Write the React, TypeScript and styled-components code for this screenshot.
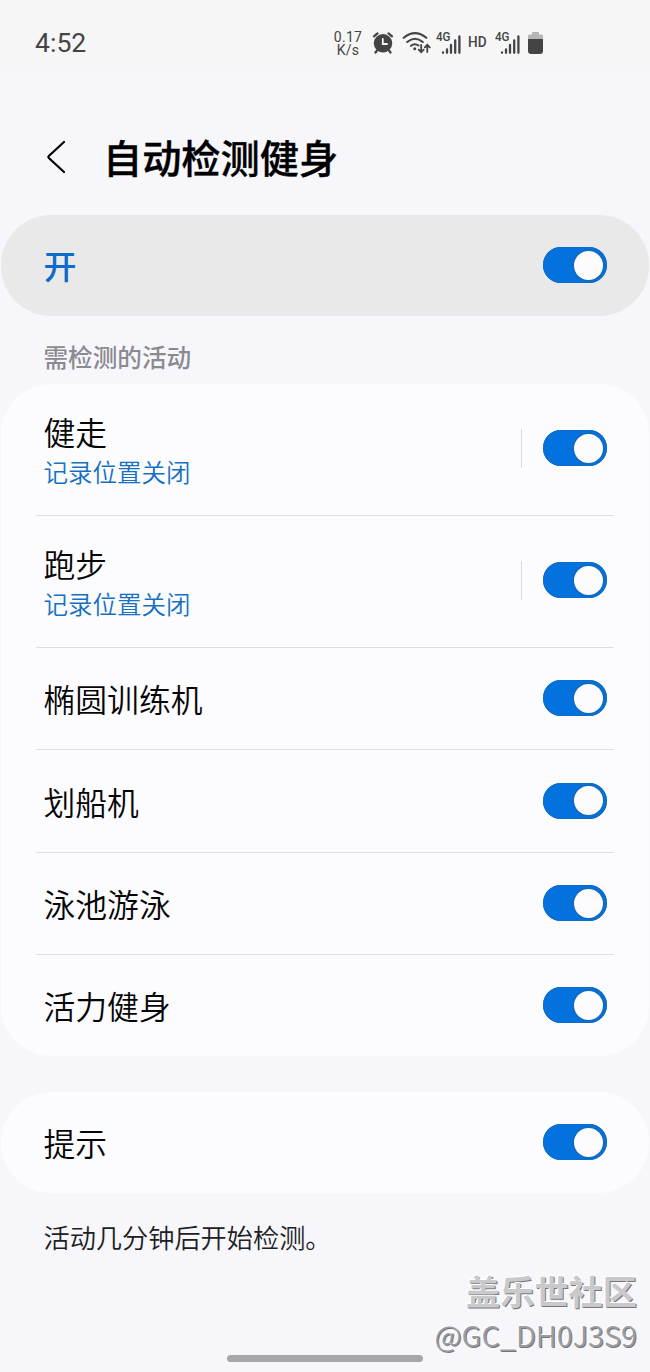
import React from 'react';
import styled, { createGlobalStyle } from 'styled-components';

const GlobalStyle = createGlobalStyle`
  * { box-sizing: border-box; }
  body {
    margin: 0;
    background: #f6f6fb;
    font-family: Roboto, "Noto Sans CJK SC", sans-serif;
    color: #0a0a0a;
  }
`;

const Screen = styled.div`
  position: relative;
  width: 650px;
  height: 1372px;
  overflow: hidden;
  display: flex;
  flex-direction: column;
  background: #f6f6fb;
`;

const StatusBar = styled.header`
  flex: none;
  height: 73px;
  padding: 0 106px 0 35px;
  display: flex;
  justify-content: space-between;
  background: #f6f6f6;
  color: #444;
`;

const Clock = styled.span`
  font-size: 26.6px;
  line-height: 30px;
  padding-top: 28px;
`;

const StatusIcons = styled.div`
  display: flex;
  padding-top: 28px;
`;

const Speed = styled.div`
  width: 32px;
  padding-top: 3px;
  display: flex;
  flex-direction: column;
  align-items: center;
  font-size: 14px;
  line-height: 13px;
  letter-spacing: 0.3px;
  white-space: nowrap;
`;

const StatusGlyphs = styled.svg`
  display: block;
  width: 180px;
  height: 32px;
`;

const TitleBar = styled.div`
  flex: none;
  height: 142px;
  padding: 64px 0 0 44px;
  display: flex;
  align-items: flex-start;
`;

const BackIcon = styled.svg`
  width: 24px;
  height: 36px;
  margin: 2px 35px 0 0;
`;

const Title = styled.h1`
  margin: 0;
  padding-top: 3px;
  font-size: 39.2px;
  line-height: 40px;
  font-weight: 500;
  color: #000;
  -webkit-text-stroke: 0.4px #000;
`;

const Card = styled.section<{ $tone?: string }>`
  flex: none;
  margin: 0 1px;
  padding: 0 35px;
  border-radius: 50px;
  background: ${p => p.$tone ?? '#fcfcff'};
`;

const Row = styled.div<{ $height: number; $divided?: boolean }>`
  height: ${p => p.$height}px;
  padding: 0 7px 0 8px;
  display: flex;
  align-items: center;
  justify-content: space-between;
  border-bottom: ${p => (p.$divided ? '1px solid #dedee3' : 'none')};
`;

const Names = styled.div<{ $stacked?: boolean }>`
  margin-left: -0.5px;
  padding-top: ${p => (p.$stacked ? 9 : 5)}px;
`;

const Label = styled.span<{ $primary?: boolean }>`
  display: block;
  font-size: ${p => (p.$primary ? 33 : 31.8)}px;
  line-height: 40px;
  font-weight: ${p => (p.$primary ? 500 : 350)};
  color: ${p => (p.$primary ? '#0d6ccb' : '#050505')};
`;

const Note = styled.span`
  display: block;
  font-size: 24.5px;
  line-height: 40px;
  font-weight: 350;
  color: #1570c2;
`;

const Controls = styled.div<{ $split?: boolean }>`
  display: flex;
  align-items: center;
  height: 39px;
  padding-left: 21px;
  margin-top: ${p => (p.$split ? -3 : -1)}px;
  border-left: ${p => (p.$split ? '1px solid #dadae0' : 'none')};
`;

const Track = styled.button`
  width: 64px;
  height: 36px;
  padding: 0 4px;
  border: 0;
  border-radius: 18px;
  display: flex;
  justify-content: flex-end;
  align-items: center;
  background: #0472de;
  box-shadow: inset 0 0 0 1px #0f6cc8;
`;

const Knob = styled.span`
  width: 29px;
  height: 29px;
  border-radius: 50%;
  background: #fcfcff;
  box-shadow: 0 0 2px 1px #1766b0;
`;

const SectionTitle = styled.h2`
  flex: none;
  height: 68px;
  margin: 0;
  padding: 25px 0 0 43.5px;
  font-size: 24.6px;
  line-height: 36px;
  font-weight: 500;
  color: #8a8a8f;
`;

const Gap = styled.div`
  flex: none;
  height: 36px;
`;

const Hint = styled.p`
  margin: 26px 0 0 43.5px;
  font-size: 26.2px;
  line-height: 40px;
  font-weight: 350;
  color: #202022;
`;

const Watermark = styled.div`
  position: absolute;
  right: 13px;
  bottom: 16px;
  display: flex;
  flex-direction: column;
  align-items: flex-end;
  font-family: "Noto Sans CJK SC", sans-serif;
`;

const Community = styled.span`
  font-size: 34.2px;
  line-height: 44px;
  font-weight: 700;
  color: #c9c9cb;
  text-shadow: -1px -1px 0 #fff, 1px 1px 0 #77777a;
`;

const Author = styled.span`
  font-size: 29px;
  line-height: 44px;
  font-weight: 350;
  color: #9c9c9f;
  text-shadow: -1px -1px 0 #fff, 1px 1px 0 #77777a;
`;

const HomeHandle = styled.div`
  position: absolute;
  left: 227px;
  bottom: 10px;
  width: 196px;
  height: 7px;
  border-radius: 4px;
  background: #a7a7a9;
`;

const Switch = ({ split }: { split?: boolean }) => (
  <Controls $split={split}>
    <Track type="button" role="switch" aria-checked="true">
      <Knob />
    </Track>
  </Controls>
);

const Bars = ({ x }: { x: number }) => (
  <path
    d={`M${x} 24.5v.3M${x + 4} 21.500v3.300M${x + 8} 17v7.800M${x + 12.200} 12.500v12.300M${x + 16.400} 8.500v16.300`}
    fill="none"
    stroke="#444"
    strokeWidth="2.300"
    strokeLinecap="round"
  />
);

const StatusDrawing = () => (
  <StatusGlyphs viewBox="0 0 180 32">
    <g fill="none" stroke="#444" strokeWidth="2" strokeLinecap="round">
      <path d="M10 8.300l3.500-2.900M24.500 5.400l3.500 2.900M13 22.500l-1.500 2M25 22.500l1.500 2" strokeWidth="2.300" />
      <circle cx="19" cy="15.300" r="9.200" fill="#444" stroke="none" />
      <path d="M18.800 10.800v5.200h4.200" stroke="#f6f6f6" strokeWidth="1.800" />
      <path d="M39.700 9.800Q51 0.500 62.300 9.800M43.200 14Q51 7.500 58.800 14M47 17.800Q50.800 14.800 54.500 17.500" strokeWidth="2.100" />
      <circle cx="50.700" cy="20.700" r="1.500" fill="#444" stroke="none" />
      <path d="M57.200 17v7M54.700 21.700l2.500 2.500 2.500-2.500M63.300 24v-7M60.800 19.300l2.500-2.500 2.500 2.500" strokeWidth="1.800" />
    </g>
    <g fill="#444" fontFamily="Roboto" fontWeight="500">
      <text x="72" y="13" fontSize="12" textLength="14.500" lengthAdjust="spacingAndGlyphs">4G</text>
      <text x="104" y="19" fontSize="14" textLength="18.500" lengthAdjust="spacingAndGlyphs">HD</text>
      <text x="131" y="13" fontSize="12" textLength="14.500" lengthAdjust="spacingAndGlyphs">4G</text>
    </g>
    <Bars x={79} />
    <Bars x={138} />
    <path d="M168 4h7v2.500h2.500q1.500 0 1.500 1.500V12h-15V8q0-1.500 1.500-1.500h2.500z" fill="#b5b5b5" />
    <path d="M164 11h15v12q0 3-3 3h-9q-3 0-3-3z" fill="#444" />
  </StatusGlyphs>
);

const activities = [
  { name: '健走', note: '记录位置关闭', height: 132 },
  { name: '跑步', note: '记录位置关闭', height: 132 },
  { name: '椭圆训练机', height: 102 },
  { name: '划船机', height: 103 },
  { name: '泳池游泳', height: 102 },
  { name: '活力健身', height: 101 },
];

export default function App() {
  return (
    <Screen>
      <GlobalStyle />
      <StatusBar>
        <Clock>4:52</Clock>
        <StatusIcons>
          <Speed>
            <span>0.17</span>
            <span>K/s</span>
          </Speed>
          <StatusDrawing />
        </StatusIcons>
      </StatusBar>
      <TitleBar>
        <BackIcon viewBox="0 0 24 36">
          <path
            d="M20 3L4.800 17q-1 1 0 2L20 33"
            fill="none"
            stroke="#000"
            strokeWidth="2.200"
            strokeLinecap="round"
            strokeLinejoin="round"
          />
        </BackIcon>
        <Title>自动检测健身</Title>
      </TitleBar>
      <Card $tone="#e9e9e9">
        <Row $height={101}>
          <Names>
            <Label $primary>开</Label>
          </Names>
          <Switch />
        </Row>
      </Card>
      <SectionTitle>需检测的活动</SectionTitle>
      <Card>
        {activities.map((a, i) => (
          <Row key={a.name} $height={a.height} $divided={i < activities.length - 1}>
            <Names $stacked={!!a.note}>
              <Label>{a.name}</Label>
              {a.note && <Note>{a.note}</Note>}
            </Names>
            <Switch split={!!a.note} />
          </Row>
        ))}
      </Card>
      <Gap />
      <Card>
        <Row $height={101}>
          <Names>
            <Label>提示</Label>
          </Names>
          <Switch />
        </Row>
      </Card>
      <Hint>活动几分钟后开始检测。</Hint>
      <Watermark>
        <Community>盖乐世社区</Community>
        <Author>@GC_DH0J3S9</Author>
      </Watermark>
      <HomeHandle />
    </Screen>
  );
}
